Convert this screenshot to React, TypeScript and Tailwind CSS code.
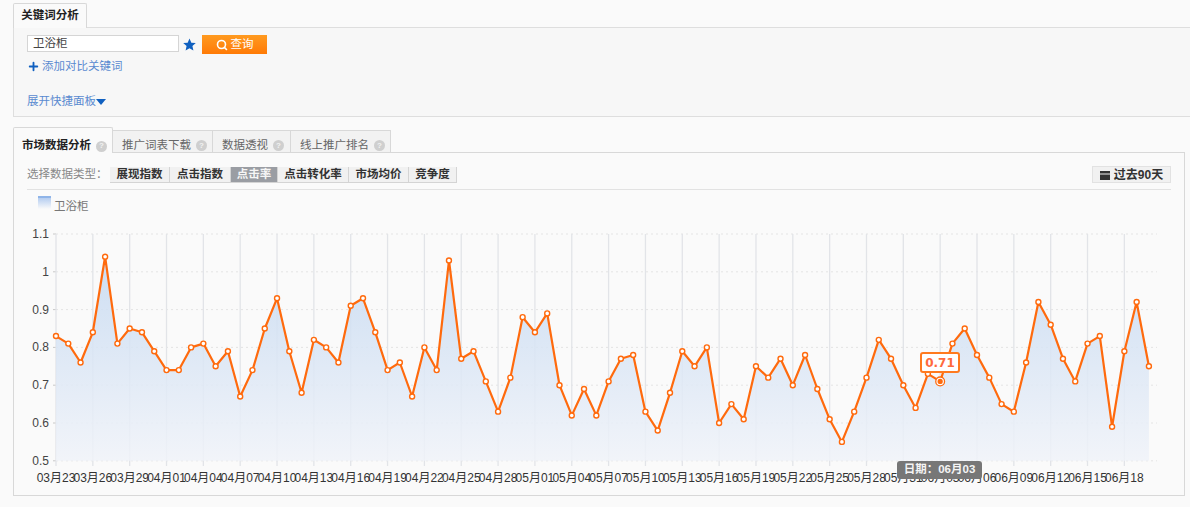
import { Search, Plus } from 'lucide-react'

const values = [
  0.83, 0.81, 0.76, 0.84, 1.04, 0.81, 0.85, 0.84, 0.79, 0.74, 0.74, 0.8, 0.81, 0.75, 0.79, 0.67, 0.74, 0.85,
  0.93, 0.79, 0.68, 0.82, 0.8, 0.76, 0.91, 0.93, 0.84, 0.74, 0.76, 0.67, 0.8, 0.74, 1.03, 0.77, 0.79, 0.71,
  0.63, 0.72, 0.88, 0.84, 0.89, 0.7, 0.62, 0.69, 0.62, 0.71, 0.77, 0.78, 0.63, 0.58, 0.68, 0.79, 0.75, 0.8,
  0.6, 0.65, 0.61, 0.75, 0.72, 0.77, 0.7, 0.78, 0.69, 0.61, 0.55, 0.63, 0.72, 0.82, 0.77, 0.7, 0.64, 0.73,
  0.71, 0.81, 0.85, 0.78, 0.72, 0.65, 0.63, 0.76, 0.92, 0.86, 0.77, 0.71, 0.81, 0.83, 0.59, 0.79, 0.92, 0.75,
]

const dateLabels = [
  '03月23', '03月26', '03月29', '04月01', '04月04', '04月07', '04月10', '04月13', '04月16', '04月19',
  '04月22', '04月25', '04月28', '05月01', '05月04', '05月07', '05月10', '05月13', '05月16', '05月19',
  '05月22', '05月25', '05月28', '05月31', '06月03', '06月06', '06月09', '06月12', '06月15', '06月18',
]

const yTicks = ['1.1', '1', '0.9', '0.8', '0.7', '0.6', '0.5']

const dataTypes = [
  { name: '展现指数', width: 'w-[60px]' },
  { name: '点击指数', width: 'w-[61px]' },
  { name: '点击率', width: 'w-[47px]' },
  { name: '点击转化率', width: 'w-[71px]' },
  { name: '市场均价', width: 'w-[60px]' },
  { name: '竞争度', width: 'w-[48px]' },
]

// chart coords are relative to the svg, which starts right under the toolbar
const x0 = 42
const step = 12.28
const top = 44
const xAt = (i: number) => x0 + i * step
const yAt = (v: number) => top + (1.1 - v) * 378

function HelpDot() {
  return (
    <span className="ml-[5px] inline-flex h-[11px] w-[11px] items-center justify-center rounded-full bg-[#cfcfcf] text-[8px] leading-none font-bold text-[#f2f2f2]">
      ?
    </span>
  )
}

function Chart() {
  const points = values.map((v, i) => `${xAt(i).toFixed(1)},${yAt(v).toFixed(1)}`).join(' ')
  const area = `${xAt(0)},${yAt(0.5)} ${points} ${xAt(89)},${yAt(0.5)}`

  return (
    <div className="relative h-[306px]">
      <svg width="1170" height="306" className="block">
        <defs>
          <linearGradient id="areaFill" x1="0" y1="0" x2="0" y2="1">
            <stop offset="0" stopColor="#c5d9f1" />
            <stop offset="1" stopColor="#f0f3f9" />
          </linearGradient>
        </defs>
        {yTicks.map((t, i) => {
          const y = top + i * 37.8
          return (
            <g key={t}>
              <line x1={42} x2={1143} y1={y} y2={y} stroke="#e4e4e4" strokeDasharray="2 3" />
              <line x1={39} x2={42} y1={y} y2={y} stroke="#c8c8c8" />
              <text x={35} y={y + 4} textAnchor="end" fontSize="12" fill="#444">
                {t}
              </text>
            </g>
          )
        })}
        {dateLabels.map((d, i) => (
          <g key={d}>
            <line x1={xAt(i * 3)} x2={xAt(i * 3)} y1={top} y2={top + 232} stroke="#e2e4e8" strokeWidth="1.3" />
            <text x={xAt(i * 3)} y={292} textAnchor="middle" fontSize="12" fill="#333">
              {d}
            </text>
          </g>
        ))}
        <polygon points={area} fill="url(#areaFill)" fillOpacity="0.85" />
        <polyline points={points} fill="none" stroke="#ff6a0d" strokeWidth="2.2" strokeLinejoin="round" />
        {values.map((v, i) => (
          <circle key={i} cx={xAt(i)} cy={yAt(v)} r="2.5" fill="#fff" stroke="#ff6a0d" strokeWidth="1.4" />
        ))}
        <circle cx={xAt(72)} cy={yAt(0.71)} r="4.4" fill="#fff" stroke="#ff6a0d" strokeWidth="1.3" />
        <circle cx={xAt(72)} cy={yAt(0.71)} r="2.6" fill="#ff6a0d" />
      </svg>

      <div className="absolute top-[162px] left-[906px] flex h-[21px] w-[40px] items-center justify-center rounded-[3px] border-2 border-[#ff7a1f] bg-white font-['DejaVu_Sans'] text-[12px] font-bold text-[#ff6a3d]">
        0.71
      </div>
      <div className="absolute top-[271px] left-[883px] flex h-[18px] w-[85px] items-center justify-center rounded-[3px] bg-[#777] text-[11.5px] font-bold text-[#f4f4f4]">
        日期：06月03
      </div>
    </div>
  )
}

export default function App() {
  return (
    <div
      className="h-[507px] w-[1190px] overflow-hidden bg-[#fafafa] pt-[3px] pl-[13px] text-[11.5px] text-[#333]"
      style={{ fontFamily: '"Liberation Sans", "Noto Sans CJK SC", sans-serif' }}
    >
      {/* keyword tab */}
      <div className="relative z-10 -mb-px flex h-[25px] w-[74px] items-center justify-center rounded-t-[2px] border border-b-0 border-[#d8d8d8] bg-[#fafafa] font-bold text-[#222]">
        关键词分析
      </div>
      <div className="h-[90px] w-[1190px] border border-[#dedede] bg-[#f7f7f7] pt-[7px] pl-[13px]">
        <div className="flex items-start">
          <div className="flex h-[17px] w-[152px] items-center border border-[#d5d5d5] bg-white pl-[5px] text-[#444]">
            卫浴柜
          </div>
          <svg viewBox="0 0 24 24" className="mt-[3px] ml-[4px] h-[13px] w-[13px] fill-[#1060c0]">
            <polygon points="12,1 15.4,8.6 23.6,9.4 17.4,14.9 19.2,23 12,18.8 4.8,23 6.6,14.9 0.4,9.4 8.6,8.6" />
          </svg>
          <button className="ml-[6px] flex h-[19px] w-[65px] items-center justify-center gap-[3px] bg-gradient-to-b from-[#ff9a1f] to-[#ff7a05] text-white">
            <Search className="h-[12px] w-[12px]" strokeWidth={3.2} />
            查询
          </button>
        </div>
        <div className="mt-[4px] flex h-[17px] items-center text-[#5a8ad0]">
          <Plus className="h-[13px] w-[13px] text-[#1060c0]" strokeWidth={3.4} />
          <span className="ml-[2px]">添加对比关键词</span>
        </div>
        <div className="mt-[18px] flex h-[17px] items-center text-[#5a8ad0]">
          展开快捷面板
          <span className="h-0 w-0 border-x-[5px] border-t-[6px] border-x-transparent border-t-[#1060c0]" />
        </div>
      </div>

      {/* data tabs */}
      <div className="relative z-10 mt-[10px] -mb-px flex h-[26px] items-end">
        <div className="flex h-[26px] w-[100px] items-center justify-start rounded-t-[2px] border border-b-0 border-[#d8d8d8] bg-[#fafafa] pt-[11px] pl-[8px] font-bold text-[#222]">
          市场数据分析
          <HelpDot />
        </div>
        {['推广词表下载', '数据透视', '线上推广排名'].map((t, i) => (
          <div
            key={t}
            className={`flex h-[23px] items-center justify-start border border-l-0 border-[#d8d8d8] bg-[#f2f2f2] pt-[8px] pl-[9px] text-[#666] ${
              i === 1 ? 'w-[78px]' : 'w-[100px]'
            }`}
          >
            {t}
            <HelpDot />
          </div>
        ))}
      </div>

      <div className="h-[344px] w-[1172px] border border-[#d8d8d8] bg-[#fafafa]">
        <div className="mx-[13px] flex h-[37px] items-start justify-between border-b border-[#e2e2e2] pt-[13px]">
          <div className="flex items-center">
            <span className="w-[83px] text-[#888]">选择数据类型：</span>
            {dataTypes.map((d) => (
              <span
                key={d.name}
                className={`flex h-[16px] items-center justify-center border-r border-b border-[#d4d4d4] font-bold ${d.width} ${
                  d.name === '点击率' ? 'bg-[#9a9da3] text-[#f5f5f5]' : 'bg-[#f1f1f1] text-[#333]'
                }`}
              >
                {d.name}
              </span>
            ))}
          </div>
          <span className="flex h-[17px] w-[79px] items-center justify-center gap-[4px] border border-[#e2e2e2] bg-[#f1f1f1] text-[12px] font-bold text-[#333]">
            <svg viewBox="0 0 10 10" className="h-[10px] w-[10px] fill-[#333]">
              <rect x="0" y="1" width="10" height="2.5" />
              <rect x="0" y="4.5" width="10" height="5.5" />
            </svg>
            过去90天
          </span>
        </div>
        <div className="flex h-[0px] items-start pl-[24px]">
          <span className="mt-[6px] h-[13px] w-[13px] border-t-2 border-[#8fb4e8] bg-gradient-to-b from-[#b5cdf0] to-[#fafafa]" />
          <span className="mt-[8px] ml-[3px] text-[#777]">卫浴柜</span>
        </div>
        <Chart />
      </div>
    </div>
  )
}
